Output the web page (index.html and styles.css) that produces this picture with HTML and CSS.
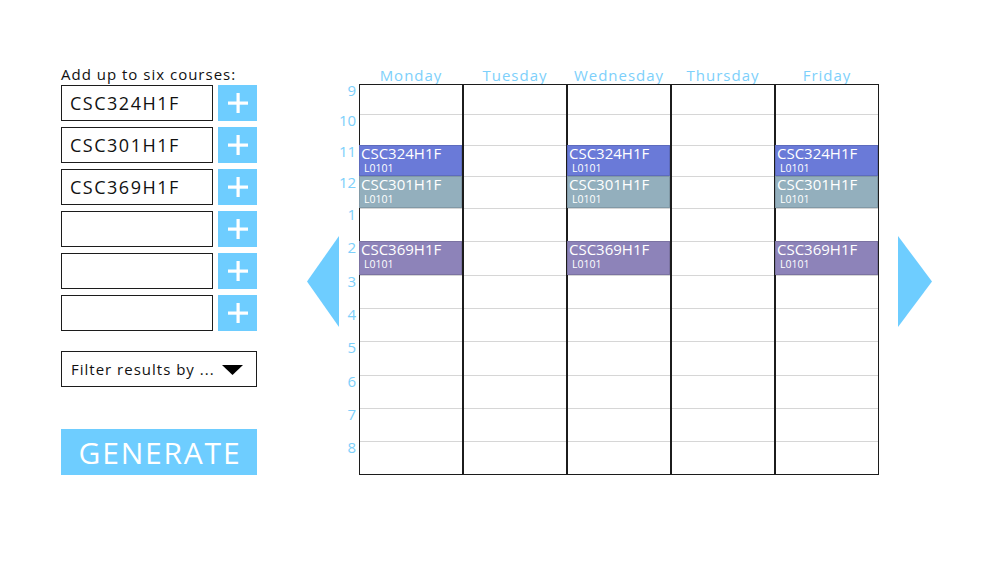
FILE: index.html
```html
<!DOCTYPE html>
<html lang="en">
<head>
<meta charset="utf-8">
<title>Course Scheduler</title>
<link rel="stylesheet" href="styles.css">
</head>
<body>
<div class="app">
  <section class="left">
    <div class="title">Add up to six courses:</div>
    <div class="course-row"><div class="course-input">CSC324H1F</div><div class="add-btn"><svg width="20" height="20" viewBox="0 0 20 20"><rect x="8.5" y="0" width="3.2" height="20" fill="#fff"/><rect x="0" y="8.5" width="20" height="3.2" fill="#fff"/></svg></div></div>
    <div class="course-row"><div class="course-input">CSC301H1F</div><div class="add-btn"><svg width="20" height="20" viewBox="0 0 20 20"><rect x="8.5" y="0" width="3.2" height="20" fill="#fff"/><rect x="0" y="8.5" width="20" height="3.2" fill="#fff"/></svg></div></div>
    <div class="course-row"><div class="course-input">CSC369H1F</div><div class="add-btn"><svg width="20" height="20" viewBox="0 0 20 20"><rect x="8.5" y="0" width="3.2" height="20" fill="#fff"/><rect x="0" y="8.5" width="20" height="3.2" fill="#fff"/></svg></div></div>
    <div class="course-row"><div class="course-input"></div><div class="add-btn"><svg width="20" height="20" viewBox="0 0 20 20"><rect x="8.5" y="0" width="3.2" height="20" fill="#fff"/><rect x="0" y="8.5" width="20" height="3.2" fill="#fff"/></svg></div></div>
    <div class="course-row"><div class="course-input"></div><div class="add-btn"><svg width="20" height="20" viewBox="0 0 20 20"><rect x="8.5" y="0" width="3.2" height="20" fill="#fff"/><rect x="0" y="8.5" width="20" height="3.2" fill="#fff"/></svg></div></div>
    <div class="course-row"><div class="course-input"></div><div class="add-btn"><svg width="20" height="20" viewBox="0 0 20 20"><rect x="8.5" y="0" width="3.2" height="20" fill="#fff"/><rect x="0" y="8.5" width="20" height="3.2" fill="#fff"/></svg></div></div>
    <div class="filter"><span>Filter results by ...</span><svg width="21" height="10" viewBox="0 0 21 10"><polygon points="0,0 21,0 10.5,10" fill="#000"/></svg></div>
    <div class="generate">GENERATE</div>
  </section>

  <div class="arrow arrow-left"><svg width="32" height="91" viewBox="0 0 32 91"><polygon points="32,0 0,45.5 32,91" fill="#6ecdff"/></svg></div>

  <section class="calendar">
    <div class="days">
      <div class="day-name">Monday</div>
      <div class="day-name">Tuesday</div>
      <div class="day-name">Wednesday</div>
      <div class="day-name">Thursday</div>
      <div class="day-name">Friday</div>
    </div>
    <div class="cal-body">
      <div class="hours">
        <div>9</div><div>10</div><div>11</div><div>12</div><div>1</div><div>2</div>
        <div>3</div><div>4</div><div>5</div><div>6</div><div>7</div><div>8</div>
      </div>
      <div class="week">
        <div class="day">
          <div class="slots"><div></div><div></div><div></div><div></div><div></div><div></div><div></div><div></div><div></div><div></div><div></div><div></div></div>
          <div class="events">
            <div class="ev ev-blue r3"><div class="ev-code">CSC324H1F</div><div class="ev-sec">L0101</div></div>
            <div class="ev ev-grey r4"><div class="ev-code">CSC301H1F</div><div class="ev-sec">L0101</div></div>
            <div class="ev ev-purple r6"><div class="ev-code">CSC369H1F</div><div class="ev-sec">L0101</div></div>
          </div>
        </div>
        <div class="day">
          <div class="slots"><div></div><div></div><div></div><div></div><div></div><div></div><div></div><div></div><div></div><div></div><div></div><div></div></div>
        </div>
        <div class="day">
          <div class="slots"><div></div><div></div><div></div><div></div><div></div><div></div><div></div><div></div><div></div><div></div><div></div><div></div></div>
          <div class="events">
            <div class="ev ev-blue r3"><div class="ev-code">CSC324H1F</div><div class="ev-sec">L0101</div></div>
            <div class="ev ev-grey r4"><div class="ev-code">CSC301H1F</div><div class="ev-sec">L0101</div></div>
            <div class="ev ev-purple r6"><div class="ev-code">CSC369H1F</div><div class="ev-sec">L0101</div></div>
          </div>
        </div>
        <div class="day">
          <div class="slots"><div></div><div></div><div></div><div></div><div></div><div></div><div></div><div></div><div></div><div></div><div></div><div></div></div>
        </div>
        <div class="day">
          <div class="slots"><div></div><div></div><div></div><div></div><div></div><div></div><div></div><div></div><div></div><div></div><div></div><div></div></div>
          <div class="events">
            <div class="ev ev-blue r3"><div class="ev-code">CSC324H1F</div><div class="ev-sec">L0101</div></div>
            <div class="ev ev-grey r4"><div class="ev-code">CSC301H1F</div><div class="ev-sec">L0101</div></div>
            <div class="ev ev-purple r6"><div class="ev-code">CSC369H1F</div><div class="ev-sec">L0101</div></div>
          </div>
        </div>
      </div>
    </div>
  </section>

  <div class="arrow arrow-right"><svg width="34" height="91" viewBox="0 0 34 91"><polygon points="0,0 34,45.5 0,91" fill="#6ecdff"/></svg></div>
</div>
</body>
</html>
```

FILE: styles.css
```css
* { box-sizing: border-box; }

html, body {
  margin: 0;
  padding: 0;
  background: #fff;
}

body {
  width: 1000px;
  height: 562px;
  overflow: hidden;
  font-family: "Open Sans", "Noto Sans", sans-serif;
  color: #111;
}

.app {
  display: flex;
  align-items: flex-start;
  padding: 66px 0 0 61px;
}

/* ---------- left panel ---------- */
.left {
  width: 196px;
  display: flex;
  flex-direction: column;
}

.title {
  font-size: 15px;
  line-height: 17px;
  letter-spacing: 1px;
  margin-bottom: 2px;
  white-space: nowrap;
}

.course-row {
  display: flex;
  gap: 5px;
  height: 36px;
  margin-bottom: 6px;
}

.course-input {
  width: 152px;
  height: 36px;
  border: 1px solid #1c1c1c;
  padding-left: 8px;
  display: flex;
  align-items: center;
  font-size: 18px;
  letter-spacing: 1.5px;
  color: #111;
}

.add-btn {
  width: 39px;
  height: 36px;
  background: #6ecdff;
  display: flex;
  align-items: center;
  justify-content: center;
}

.add-btn svg { display: block; }

.filter {
  margin-top: 14px;
  height: 36px;
  border: 1px solid #1c1c1c;
  display: flex;
  align-items: center;
  justify-content: space-between;
  padding: 0 13px 0 9px;
  font-size: 15px;
  letter-spacing: 1px;
  white-space: nowrap;
}

.filter svg { display: block; margin-top: 1px; }

.generate {
  margin-top: 42px;
  height: 46px;
  background: #6ecdff;
  color: #fff;
  font-size: 30px;
  letter-spacing: 1.8px;
  display: flex;
  align-items: center;
  justify-content: center;
  padding-left: 2px;
}

/* ---------- arrows ---------- */
.arrow {
  margin-top: 170px;
}
.arrow svg { display: block; }
.arrow-left { margin-left: 50px; }
.arrow-right { margin-left: 19px; }

/* ---------- calendar ---------- */
.calendar {
  display: flex;
  flex-direction: column;
}

.days {
  display: grid;
  grid-template-columns: repeat(5, 104px);
  margin-left: 20px;
  height: 18px;
}

.day-name {
  text-align: center;
  font-size: 15px;
  line-height: 19px;
  letter-spacing: 1px;
  color: #7dd0fb;
  white-space: nowrap;
}

.cal-body {
  display: flex;
}

.hours {
  width: 20px;
  margin-top: 1px;
  display: grid;
  grid-template-rows: 30px 31px 31px 32px 33px 34px 33px 33px 34px 33px 33px 32px;
  text-align: right;
  padding-right: 3px;
  font-size: 15px;
  line-height: 11px;
  color: #7dd0fb;
}

.week {
  width: 520px;
  display: grid;
  grid-template-columns: repeat(5, 102px);
  column-gap: 2px;
  border: 1px solid #1c1c1c;
  background: #1c1c1c;
}

.day {
  display: grid;
  background: #fff;
}

.slots, .events {
  grid-area: 1 / 1;
  display: grid;
  grid-template-rows: 30px 31px 31px 32px 33px 34px 33px 33px 34px 33px 33px 32px;
}

.slots > div {
  border-bottom: 1px solid #d6d6d6;
}
.slots > div:last-child {
  border-bottom: none;
}

.ev {
  grid-column: 1;
  margin: -1px 0 1px -1px;
  padding: 0 0 0 2px;
  color: #fff;
  box-shadow: inset 0 0 0 1px rgba(0, 0, 0, 0.12);
}

.r3 { grid-row: 3; }
.r4 { grid-row: 4; }
.r6 { grid-row: 6; }

.ev-blue { background: #6a7ad8; }
.ev-grey { background: #93afbd; }
.ev-purple { background: #8d83b9; }

.ev-code {
  font-size: 15px;
  line-height: 16px;
}

.ev-sec {
  font-size: 10.5px;
  line-height: 12px;
  margin-top: 1px;
  padding-left: 3px;
}
```
